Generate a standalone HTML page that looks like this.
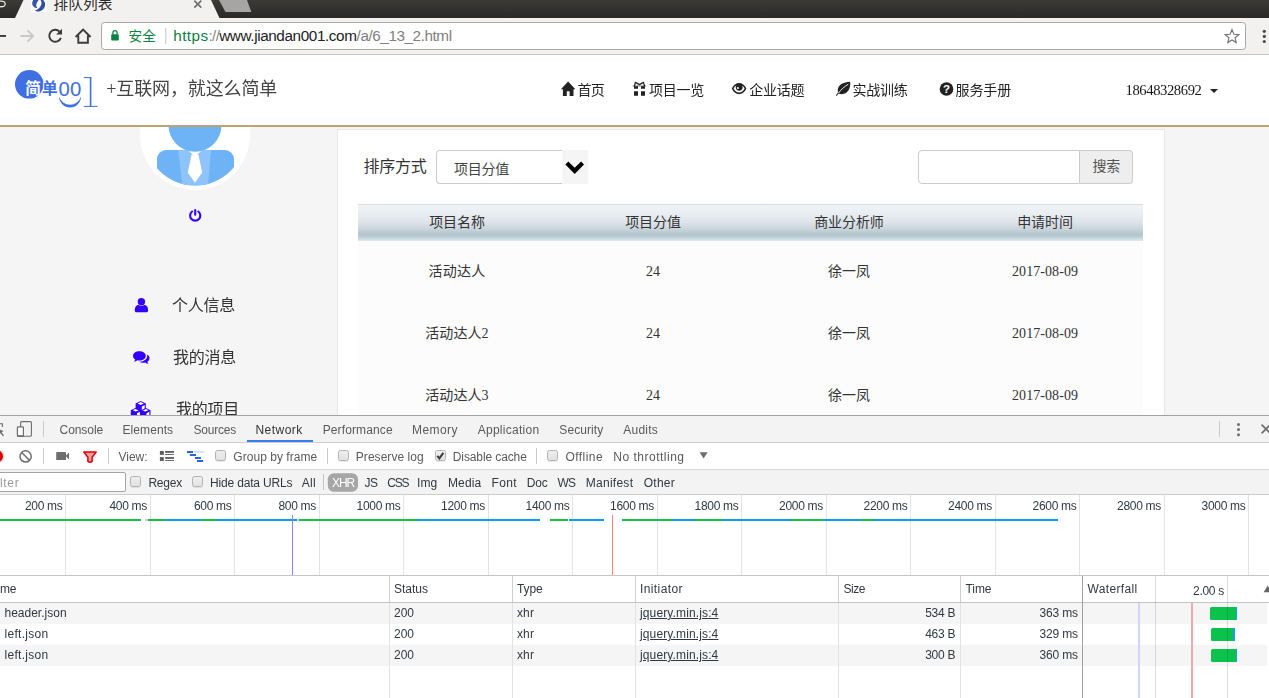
<!DOCTYPE html>
<html lang="zh-CN">
<head>
<meta charset="utf-8">
<title>排队列表</title>
<style>
html,body{margin:0;padding:0;}
body{width:1269px;height:698px;overflow:hidden;position:relative;background:#fff;font-family:"Liberation Sans","Noto Sans CJK SC",sans-serif;}
.abs,.t,svg.i{position:absolute;}
.t{white-space:nowrap;display:block;}
#chrome{position:absolute;left:0;top:0;width:1269px;height:55px;background:#f2f1f0;overflow:hidden;}
#site{position:absolute;left:0;top:0;width:1269px;height:415px;overflow:hidden;}
#dev{position:absolute;left:0;top:0;width:1269px;height:698px;overflow:hidden;pointer-events:none;}
#sitebg{position:absolute;left:0;top:55px;width:1269px;height:360px;background:#f5f5f5;}
#devbg{position:absolute;left:0;top:415px;width:1269px;height:283px;background:#fff;}
.cb{position:absolute;width:11px;height:11px;border:1px solid #b2b2b2;border-radius:2.5px;background:linear-gradient(#efefef,#e1e1e1);box-sizing:border-box;box-shadow:0 1px 0 rgba(0,0,0,0.08);}
.vd{position:absolute;width:1px;background:#ccc;}
.hl{position:absolute;height:1px;left:0;width:1269px;background:#ccc;}
.grid{position:absolute;width:1px;background:#e3e3e3;}
</style>
</head>
<body>
<!-- ================= SITE ================= -->
<div id="site">
<div id="sitebg"></div>
<div class="abs" style="left:0;top:55px;width:1269px;height:70px;background:#fff;border-bottom:2px solid #bda572;"></div>
<!-- logo -->
<svg class="i" style="left:0;top:55px" width="120" height="70" viewBox="0 55 120 70">
  <circle cx="29.3" cy="84.3" r="14.3" fill="#3f6fe0"/>
  <text x="41.9" y="93.6" font-family="'Liberation Sans','Noto Sans CJK SC',sans-serif" font-size="15.6" font-weight="bold" fill="#3f6fe0" stroke="#fff" stroke-width="2" paint-order="stroke" stroke-linejoin="round">单</text>
  <text x="25.3" y="93.6" font-family="'Liberation Sans','Noto Sans CJK SC',sans-serif" font-size="15.6" font-weight="bold" fill="#fff">简</text>
  <text x="58.6" y="95.5" font-family="'Liberation Sans',sans-serif" font-size="20.6" fill="#3f6fe0" textLength="22.6" lengthAdjust="spacingAndGlyphs">00</text>
  <path d="M59.1,96.6 A10.95,10.95 0 0 0 81,96.6 A11.4,11.4 0 0 1 59.1,96.6 Z" fill="#3f6fe0"/>
  <path d="M90.6,77.4 V106.6" stroke="#3f6fe0" stroke-width="1.6" fill="none"/>
  <path d="M83.8,77.6 H91.4 M83.8,106.4 H97.6" stroke="#3f6fe0" stroke-width="1" fill="none"/>
</svg>
<!-- nav icons -->
<svg class="i" style="left:555px;top:78px" width="680" height="22" viewBox="555 78 680 22" fill="#222">
  <!-- home -->
  <path d="M568.1,81.5 L575.4,89.2 H573.5 V95.9 H569.6 V91.2 H566.8 V95.9 H562.9 V89.2 H560.9 Z"/>
  <!-- gift -->
  <path d="M634,86.2 H638 V88.7 H634 Z M641,86.2 H645 V88.7 H641 Z M634,91.3 H638 V95.8 H634 Z M641,91.3 H645 V95.8 H641 Z"/>
  <rect x="632.6" y="85.4" width="13.6" height="1.1" fill="#222" opacity="0.55"/>
  <path d="M639.4,84.6 L635.4,82.4 L634.4,86 M639.4,84.6 L643.4,82.4 L644.5,86" fill="none" stroke="#222" stroke-width="1.25" stroke-linejoin="round" stroke-linecap="round"/>
  <!-- eye -->
  <path d="M731.8,88.6 C735,81 743.2,81 746.4,88.6 C743.2,96.2 735,96.2 731.8,88.6 Z M733.6,88.6 C736,93.8 742.2,93.8 744.6,88.6 C742.2,83.6 736,83.6 733.6,88.6 Z" fill-rule="evenodd"/>
  <circle cx="739.2" cy="87.3" r="3.4"/>
  <circle cx="737.9" cy="88" r="1" fill="#fff"/>
  <!-- leaf -->
  <path d="M850.2,81.8 C851,90 846,96 838.6,93.6 L836.6,96 L835.9,95.2 L838,92.6 C836.5,86 842,82.2 850.2,81.8 Z"/>
  <path d="M838.5,93 C841,89.5 844.5,86.5 848.3,84.2" stroke="#fff" stroke-width="0.9" fill="none"/>
  <!-- question -->
  <circle cx="946.5" cy="89" r="6.85"/>
  <text x="946.5" y="93.2" text-anchor="middle" font-family="'Liberation Sans',sans-serif" font-weight="bold" font-size="11.5" fill="#fff">?</text>
  <!-- caret -->
  <polygon points="1210,89 1218,89 1214,93.1"/>
</svg>
<!-- avatar -->
<svg class="i" style="left:135px;top:127px" width="120" height="70" viewBox="135 127 120 70">
  <defs><clipPath id="avc"><circle cx="195" cy="135" r="50.5"/></clipPath></defs>
  <circle cx="195" cy="135" r="55" fill="#fff"/>
  <g clip-path="url(#avc)">
    <rect x="157" y="150" width="77" height="50" rx="9" ry="9" fill="#6fb3f7"/>
    <polygon points="178.4,150 211,150 207.6,190 182.7,190" fill="#8ec4fb"/>
    <polygon points="187.6,150 202.4,150 195,156.5" fill="#fff"/>
    <polygon points="191.6,154.5 198.4,154.5 202.2,172.4 195,182.8 187.8,172.4" fill="#fff"/>
  </g>
  <circle cx="195" cy="125.2" r="26.5" fill="#6fb3f7"/>
</svg>
<!-- sidebar icons -->
<svg class="i" style="left:125px;top:205px" width="90" height="210" viewBox="125 205 90 210" fill="#3300ff">
  <!-- power -->
  <path d="M192.1,211.5 A5.1,5.1 0 1 0 198.3,211.5" stroke="#3300ff" stroke-width="2.1" fill="none" stroke-linecap="round"/>
  <path d="M195.2,210 V214.8" stroke="#3300ff" stroke-width="2.1" fill="none" stroke-linecap="round"/>
  <!-- user -->
  <circle cx="141.4" cy="301.7" r="3.7"/>
  <path d="M134.8,310.4 C134.8,306.5 136.5,305 138.6,305 C140.3,306.2 142.5,306.2 144.2,305 C146.3,305 148.1,306.5 148.1,310.4 C148.1,311.6 147.2,312.3 146.1,312.3 H136.8 C135.7,312.3 134.8,311.6 134.8,310.4 Z"/>
  <!-- comments -->
  <path d="M139.4,351.3 C143,351.3 145.8,353.3 145.8,355.9 C145.8,358.5 143,360.5 139.4,360.5 C138.7,360.5 138.1,360.4 137.5,360.3 C136.5,361.1 135.2,361.6 133.8,361.7 C134.5,361.1 135,360.3 135.2,359.5 C133.8,358.6 133,357.3 133,355.9 C133,353.3 135.8,351.3 139.4,351.3 Z"/>
  <path d="M147.1,354.6 C148.6,355.5 149.5,356.8 149.5,358.2 C149.5,359.6 148.7,360.8 147.4,361.7 C147.6,362.5 148.1,363.2 148.8,363.8 C147.4,363.7 146.1,363.2 145.1,362.4 C144.5,362.6 143.9,362.7 143.2,362.7 C141.6,362.7 140.2,362.3 139.1,361.7 C143.6,361.8 147.2,359.2 147.2,355.9 C147.2,355.5 147.2,355 147.1,354.6 Z"/>
  <!-- cubes -->
  <polygon points="135.9,407.8 141.0,410.2 141.0,415.7 135.9,418.1 130.8,415.7 130.8,410.2"/><polygon points="135.9,408.8 139.0,410.2 135.9,411.6 132.8,410.2" fill="#fff"/><polygon points="137.0,413.3 139.9,411.7 139.9,415.0 137.0,416.6" fill="#fff"/>
  <polygon points="145.4,407.8 150.5,410.2 150.5,415.7 145.4,418.1 140.3,415.7 140.3,410.2"/><polygon points="145.4,408.8 148.5,410.2 145.4,411.6 142.3,410.2" fill="#fff"/><polygon points="146.5,413.3 149.4,411.7 149.4,415.0 146.5,416.6" fill="#fff"/>
  <polygon points="140.7,401.1 145.8,403.5 145.8,409.0 140.7,411.4 135.6,409.0 135.6,403.5"/><polygon points="140.7,402.1 143.8,403.5 140.7,404.9 137.6,403.5" fill="#fff"/><polygon points="141.8,406.6 144.7,405.0 144.7,408.3 141.8,409.9" fill="#fff"/>
</svg>
<!-- content panel -->
<div class="abs" style="left:337px;top:129px;width:826px;height:300px;background:#fff;border:1px solid #e7e7e7;"></div>
<!-- select -->
<div class="abs" style="left:436px;top:150px;width:126px;height:32px;border:1px solid #ccc;border-right:none;border-radius:4px 0 0 4px;background:#fff;"></div>
<div class="abs" style="left:562px;top:150px;width:26px;height:34px;background:#f5f5f5;"></div>
<svg class="i" style="left:562px;top:150px" width="26" height="34" viewBox="562 150 26 34"><polygon points="565.4,164.5 568.3,161.5 574.7,167.8 581.1,161.5 584,164.5 574.7,174"/></svg>
<!-- search -->
<div class="abs" style="left:918px;top:150px;width:160px;height:32px;border:1px solid #ccc;border-radius:4px 0 0 4px;background:#fff;"></div>
<div class="abs" style="left:1080px;top:150px;width:52px;height:32px;border:1px solid #ccc;border-left:none;border-radius:0 4px 4px 0;background:#eee;"></div>
<!-- table -->
<div class="abs" style="left:358px;top:204px;width:785px;height:37px;background:linear-gradient(#dadcdd 0,#dadcdd 1px,#eff4f7 1px,#e8edf1 28%,#dbe2e8 52%,#c9d4db 68%,#b4c4ce 82%,#c0d0d9 90%,#dceaf2 100%);"></div>
<div class="abs" style="left:358px;top:241px;width:785px;height:180px;background:#fcfcfc;"></div>
<span class="t" style="left:363.4px;top:156.0px;font-size:16px;line-height:22px;color:#333;font-family:&quot;Liberation Serif&quot;,&quot;Noto Sans CJK SC&quot;,serif;letter-spacing:-0.25px;">排序方式</span>
<span class="t" style="left:454.0px;top:160.0px;font-size:14px;line-height:20px;color:#444;font-family:&quot;Liberation Serif&quot;,&quot;Noto Sans CJK SC&quot;,serif;letter-spacing:-0.25px;">项目分值</span>
<span class="t" style="left:1092.5px;top:157.0px;font-size:14px;line-height:20px;color:#555;font-family:&quot;Liberation Serif&quot;,&quot;Noto Sans CJK SC&quot;,serif;letter-spacing:-0.25px;">搜索</span>
<span class="t" style="left:429.2px;top:213.3px;font-size:14px;line-height:20px;color:#333;font-family:&quot;Liberation Serif&quot;,&quot;Noto Sans CJK SC&quot;,serif;letter-spacing:-0.10px;">项目名称</span>
<span class="t" style="left:625.2px;top:213.3px;font-size:14px;line-height:20px;color:#333;font-family:&quot;Liberation Serif&quot;,&quot;Noto Sans CJK SC&quot;,serif;letter-spacing:-0.10px;">项目分值</span>
<span class="t" style="left:814.2px;top:213.3px;font-size:14px;line-height:20px;color:#333;font-family:&quot;Liberation Serif&quot;,&quot;Noto Sans CJK SC&quot;,serif;letter-spacing:-0.10px;">商业分析师</span>
<span class="t" style="left:1017.2px;top:213.3px;font-size:14px;line-height:20px;color:#333;font-family:&quot;Liberation Serif&quot;,&quot;Noto Sans CJK SC&quot;,serif;letter-spacing:-0.10px;">申请时间</span>
<span class="t" style="left:428.5px;top:262.3px;font-size:14px;line-height:20px;color:#333;font-family:&quot;Liberation Serif&quot;,&quot;Noto Sans CJK SC&quot;,serif;letter-spacing:0.25px;">活动达人</span>
<span class="t" style="left:646.0px;top:262.3px;font-size:14px;line-height:20px;color:#333;font-family:&quot;Liberation Serif&quot;,&quot;Noto Sans CJK SC&quot;,serif;">24</span>
<span class="t" style="left:828.0px;top:262.3px;font-size:14px;line-height:20px;color:#333;font-family:&quot;Liberation Serif&quot;,&quot;Noto Sans CJK SC&quot;,serif;">徐一凤</span>
<span class="t" style="left:1012.0px;top:262.3px;font-size:14px;line-height:20px;color:#333;font-family:&quot;Liberation Serif&quot;,&quot;Noto Sans CJK SC&quot;,serif;letter-spacing:0.07px;">2017-08-09</span>
<span class="t" style="left:425.2px;top:324.3px;font-size:14px;line-height:20px;color:#333;font-family:&quot;Liberation Serif&quot;,&quot;Noto Sans CJK SC&quot;,serif;letter-spacing:0.10px;">活动达人2</span>
<span class="t" style="left:646.0px;top:324.3px;font-size:14px;line-height:20px;color:#333;font-family:&quot;Liberation Serif&quot;,&quot;Noto Sans CJK SC&quot;,serif;">24</span>
<span class="t" style="left:828.0px;top:324.3px;font-size:14px;line-height:20px;color:#333;font-family:&quot;Liberation Serif&quot;,&quot;Noto Sans CJK SC&quot;,serif;">徐一凤</span>
<span class="t" style="left:1012.0px;top:324.3px;font-size:14px;line-height:20px;color:#333;font-family:&quot;Liberation Serif&quot;,&quot;Noto Sans CJK SC&quot;,serif;letter-spacing:0.07px;">2017-08-09</span>
<span class="t" style="left:425.2px;top:386.3px;font-size:14px;line-height:20px;color:#333;font-family:&quot;Liberation Serif&quot;,&quot;Noto Sans CJK SC&quot;,serif;letter-spacing:0.10px;">活动达人3</span>
<span class="t" style="left:646.0px;top:386.3px;font-size:14px;line-height:20px;color:#333;font-family:&quot;Liberation Serif&quot;,&quot;Noto Sans CJK SC&quot;,serif;">24</span>
<span class="t" style="left:828.0px;top:386.3px;font-size:14px;line-height:20px;color:#333;font-family:&quot;Liberation Serif&quot;,&quot;Noto Sans CJK SC&quot;,serif;">徐一凤</span>
<span class="t" style="left:1012.0px;top:386.3px;font-size:14px;line-height:20px;color:#333;font-family:&quot;Liberation Serif&quot;,&quot;Noto Sans CJK SC&quot;,serif;letter-spacing:0.07px;">2017-08-09</span>
<div style="position:absolute;left:0;top:0;width:1269px;height:415px;will-change:transform;">
<span class="t" style="left:106.3px;top:77.0px;font-size:18px;line-height:25px;color:#444;font-family:&quot;Liberation Serif&quot;,&quot;Noto Sans CJK SC&quot;,serif;letter-spacing:-0.12px;">+互联网，就这么简单</span>
<span class="t" style="left:577.5px;top:81.0px;font-size:14px;line-height:20px;color:#222;font-family:&quot;Liberation Serif&quot;,&quot;Noto Sans CJK SC&quot;,serif;letter-spacing:-0.75px;">首页</span>
<span class="t" style="left:649.0px;top:81.0px;font-size:14px;line-height:20px;color:#222;font-family:&quot;Liberation Serif&quot;,&quot;Noto Sans CJK SC&quot;,serif;letter-spacing:-0.25px;">项目一览</span>
<span class="t" style="left:749.3px;top:81.0px;font-size:14px;line-height:20px;color:#222;font-family:&quot;Liberation Serif&quot;,&quot;Noto Sans CJK SC&quot;,serif;letter-spacing:-0.25px;">企业话题</span>
<span class="t" style="left:852.4px;top:81.0px;font-size:14px;line-height:20px;color:#222;font-family:&quot;Liberation Serif&quot;,&quot;Noto Sans CJK SC&quot;,serif;letter-spacing:-0.25px;">实战训练</span>
<span class="t" style="left:955.6px;top:81.0px;font-size:14px;line-height:20px;color:#222;font-family:&quot;Liberation Serif&quot;,&quot;Noto Sans CJK SC&quot;,serif;letter-spacing:-0.12px;">服务手册</span>
<span class="t" style="left:1125.5px;top:80.3px;font-size:14.6px;line-height:20px;color:#151515;font-family:&quot;Liberation Serif&quot;,&quot;Noto Sans CJK SC&quot;,serif;letter-spacing:-0.39px;">18648328692</span>
<span class="t" style="left:172.0px;top:295.0px;font-size:16px;line-height:22px;color:#333;font-family:&quot;Liberation Serif&quot;,&quot;Noto Sans CJK SC&quot;,serif;letter-spacing:-0.25px;">个人信息</span>
<span class="t" style="left:173.0px;top:347.0px;font-size:16px;line-height:22px;color:#333;font-family:&quot;Liberation Serif&quot;,&quot;Noto Sans CJK SC&quot;,serif;letter-spacing:-0.25px;">我的消息</span>
<span class="t" style="left:176.0px;top:398.5px;font-size:16px;line-height:22px;color:#333;font-family:&quot;Liberation Serif&quot;,&quot;Noto Sans CJK SC&quot;,serif;letter-spacing:-0.25px;">我的项目</span>
</div>
</div>
<!-- ================= BROWSER CHROME ================= -->
<div id="chrome">
<svg class="i" style="left:0;top:0" width="1269" height="55" viewBox="0 0 1269 55">
  <!-- tab strip -->
  <defs><linearGradient id="tsg" x1="0" y1="0" x2="0" y2="1"><stop offset="0" stop-color="#3b3a37"/><stop offset="1" stop-color="#2a2927"/></linearGradient></defs>
  <rect x="0" y="0" width="1269" height="18" fill="url(#tsg)"/>
  <polygon points="23.5,0 211,0 219.5,18 15,18" fill="#f2f1f0"/>
  <polygon points="219,0 247,0 251.3,12 225.5,12" fill="#a6a5a3"/>
  <!-- toolbar bottom line -->
  <rect x="0" y="54" width="1269" height="1" fill="#c6c5c4"/>
  <!-- favicon -->
  <rect x="31" y="0" width="16" height="12.1" fill="#fefefe"/>
  <path d="M33.2,0 C31.4,3 31.8,6.6 36.2,8 C37.3,8.1 37.5,7.6 36.7,7 C35.6,5.4 36.5,2.5 38.7,0 Z" fill="#3158a8"/>
  <path d="M40.4,0 C41.9,1.5 41.9,4 40.4,6.6 C39.2,8.6 37.4,9.8 35,10.4 C36.5,11.7 39.5,11.9 41.6,10.6 C45.6,8.2 46.3,3 43.2,0 Z" fill="#2f4ea3"/>
  <!-- tab close -->
  <path d="M194.3,0.6 L201.3,7.6 M201.3,0.6 L194.3,7.6" stroke="#6b6b6b" stroke-width="1.5" fill="none"/>
  <!-- fragment of previous tab title -->
  <path d="M0,1.2 C3.5,0.8 5.4,2.2 5.2,4.2 C5,6.3 3,7 0,6.7" stroke="#e8e6e3" stroke-width="1.3" fill="none"/>
  <!-- back (cut) -->
  <rect x="0" y="35" width="6" height="1.9" fill="#3b3b3b"/>
  <!-- forward (disabled) -->
  <path d="M20.5,36 H33 M27.5,30.3 L33.2,36 L27.5,41.7" stroke="#c9c8c7" stroke-width="1.8" fill="none"/>
  <!-- reload -->
  <path d="M59.6,31.6 A6,6 0 1 0 60.9,37.8" stroke="#3b3b3b" stroke-width="1.9" fill="none"/>
  <polygon points="56.2,34.6 62,34.6 62,28.8" fill="#3b3b3b"/>
  <!-- home -->
  <path d="M75.6,37 L83.1,29.5 L90.6,37 M78.3,35.4 V42.7 H87.9 V35.4" stroke="#3b3b3b" stroke-width="1.9" fill="none" stroke-linejoin="miter"/>
  <!-- omnibox -->
  <rect x="101.5" y="22.5" width="1144" height="27" rx="3" ry="3" fill="#fff" stroke="#a8a7a6" stroke-width="1"/>
  <!-- lock -->
  <rect x="111.2" y="34.2" width="7.6" height="6.3" rx="0.8" fill="#0b8043"/>
  <path d="M112.9,34.6 V32.8 A2.1,2.1 0 0 1 117.1,32.8 V34.6" stroke="#0b8043" stroke-width="1.3" fill="none"/>
  <rect x="165.3" y="28" width="1" height="16" fill="#c4c4c4"/>
  <!-- star -->
  <path d="M1232,29.6 L1233.9,34.2 L1238.8,34.6 L1235.1,37.8 L1236.2,42.6 L1232,40 L1227.8,42.6 L1228.9,37.8 L1225.2,34.6 L1230.1,34.2 Z" stroke="#717171" stroke-width="1.15" fill="none" stroke-linejoin="miter"/>
  <!-- menu dots -->
  <circle cx="1264.3" cy="31.3" r="1.6" fill="#4a4a4a"/><circle cx="1264.3" cy="36.4" r="1.6" fill="#4a4a4a"/><circle cx="1264.3" cy="41.5" r="1.6" fill="#4a4a4a"/>
</svg>
<span class="t" style="left:53.6px;top:-6.4px;font-size:14.7px;line-height:21px;color:#2b2b2b;letter-spacing:0.06px;">排队列表</span>
<span class="t" style="left:128.6px;top:27.0px;font-size:13.6px;line-height:19px;color:#0b8043;">安全</span>
<span class="t" style="left:173.3px;top:24.9px;font-size:15.3px;line-height:21px;color:#0b8043;letter-spacing:0.41px;">https</span>
<span class="t" style="left:208.6px;top:24.9px;font-size:15.3px;line-height:21px;color:#8a8a8a;letter-spacing:-0.72px;">://</span>
<span class="t" style="left:219.2px;top:24.9px;font-size:15.3px;line-height:21px;color:#222;letter-spacing:-0.40px;">www.jiandan001.com</span>
<span class="t" style="left:356.6px;top:24.9px;font-size:15.3px;line-height:21px;color:#808080;letter-spacing:-0.44px;">/a/6_13_2.html</span>
</div>
<!-- ================= DEVTOOLS ================= -->
<div id="devbg"></div>
<div id="dev">
<!-- bars -->
<div class="abs" style="left:0;top:415px;width:1269px;height:1px;background:#a3a3a3;"></div>
<div class="abs" style="left:0;top:416px;width:1269px;height:26px;background:#f3f3f3;"></div>
<div class="hl" style="top:442px;background:#cdcdcd;"></div>
<div class="abs" style="left:0;top:443px;width:1269px;height:26px;background:#fff;"></div>
<div class="hl" style="top:469px;background:#dadada;"></div>
<div class="abs" style="left:0;top:470px;width:1269px;height:24px;background:#f3f3f3;"></div>
<div class="hl" style="top:494px;background:#cdcdcd;"></div>
<!-- network tab underline -->
<div class="abs" style="left:246.5px;top:440px;width:66px;height:2px;background:#3b7de8;"></div>
<!-- tabbar + toolbar icons -->
<svg class="i" style="left:0;top:416px" width="1269" height="80" viewBox="0 416 1269 80">
  <!-- inspect (cut) -->
  <path d="M0,423.8 H2.4 V427" stroke="#6e6e6e" stroke-width="1.1" fill="none"/>
  <path d="M0,429.8 L3.6,431 L1.6,432.2 L4,435.4 L3,436.2 L0.4,433.2 L0,433.6 Z" fill="#6e6e6e"/>
  <!-- device toggle -->
  <rect x="20.6" y="421.6" width="10.8" height="14.6" rx="1" fill="none" stroke="#6e6e6e" stroke-width="1.1"/>
  <rect x="17.4" y="426.8" width="6" height="9.6" rx="0.8" fill="#fbfbfb" stroke="#6e6e6e" stroke-width="1.2"/>
  <rect x="17.4" y="435.2" width="6" height="1.4" fill="#6e6e6e"/>
  <rect x="43" y="421" width="1" height="16" fill="#ccc"/>
  <rect x="1219" y="421" width="1" height="16" fill="#ccc"/>
  <circle cx="1238.5" cy="424.5" r="1.5" fill="#6e6e6e"/><circle cx="1238.5" cy="429.6" r="1.5" fill="#6e6e6e"/><circle cx="1238.5" cy="434.7" r="1.5" fill="#6e6e6e"/>
  <path d="M1261.6,424.6 L1270.4,433.4 M1270.4,424.6 L1261.6,433.4" stroke="#6e6e6e" stroke-width="1.7" fill="none"/>
  <!-- record -->
  <circle cx="-3" cy="456.2" r="7.2" fill="#f7b0b0" opacity="0.6"/>
  <circle cx="-3" cy="456.2" r="6" fill="#dc0000"/>
  <!-- clear -->
  <circle cx="25.6" cy="456.4" r="5.6" fill="none" stroke="#6e6e6e" stroke-width="1.5"/>
  <path d="M21.7,452.5 L29.5,460.3" stroke="#6e6e6e" stroke-width="1.5"/>
  <rect x="43" y="448" width="1" height="16" fill="#ccc"/>
  <!-- camera -->
  <rect x="56.2" y="452.1" width="9.8" height="7.9" rx="0.6" fill="#6e6e6e"/>
  <polygon points="65.6,456 69,452.4 69,459.6" fill="#6e6e6e"/>
  <!-- filter -->
  <path d="M83.8,452.1 H96.2 L92.1,457.2 V461.4 C91,462.2 89,462.2 87.9,461.4 V457.2 Z" fill="#f09a9a" stroke="#d8000c" stroke-width="1.5" stroke-linejoin="round"/>
  <rect x="108" y="448" width="1" height="16" fill="#ccc"/>
  <!-- list view -->
  <g fill="#5f5f5f"><rect x="159.9" y="451" width="3.9" height="3.9"/><rect x="159.9" y="457.1" width="3.9" height="3.9"/>
  <rect x="165.1" y="451" width="8.9" height="1.8"/><rect x="165.1" y="454.1" width="8.9" height="0.9"/><rect x="165.1" y="457.1" width="8.9" height="1.8"/><rect x="165.1" y="460.1" width="8.9" height="0.9"/></g>
  <!-- waterfall view -->
  <g fill="#2a66e6"><rect x="186.9" y="451" width="6.1" height="2"/><rect x="189.9" y="454" width="6.1" height="2"/><rect x="194.9" y="457" width="6.1" height="2"/><rect x="197" y="460" width="6.1" height="2"/></g>
  <rect x="193.7" y="451" width="10.3" height="2" fill="#d6e4fb"/>
  <rect x="327" y="448" width="1" height="16" fill="#ccc"/>
  <rect x="536" y="448" width="1" height="16" fill="#ccc"/>
  <polygon points="699.6,452.3 707.6,452.3 703.6,458.6" fill="#6e6e6e"/>
  <rect x="323" y="474" width="1" height="16" fill="#c4c4c4"/>
  <!-- XHR pill -->
  <rect x="327.8" y="473.2" width="30.2" height="18.5" rx="6" fill="#a6a6a6"/>
</svg>
<!-- checkboxes -->
<div class="cb" style="left:215px;top:450px;"></div>
<div class="cb" style="left:338px;top:450px;"></div>
<div class="cb" style="left:435px;top:450px;"></div>
<svg class="i" style="left:435px;top:450px" width="11" height="11" viewBox="435 450 11 11"><path d="M437.3,455.9 L439.4,458.3 L443.3,452.8" stroke="#3a3a3a" stroke-width="2" fill="none"/></svg>
<div class="cb" style="left:547px;top:450px;"></div>
<div class="cb" style="left:130px;top:476px;"></div>
<div class="cb" style="left:192px;top:476px;"></div>
<!-- filter input -->
<div class="abs" style="left:-10px;top:472px;width:134px;height:18px;border:1px solid #a4a4a4;border-radius:2px;background:#fff;"></div>
<!-- overview -->
<div class="grid" style="left:65px;top:495px;height:80px;"></div>
<div class="grid" style="left:150px;top:495px;height:80px;"></div>
<div class="grid" style="left:234px;top:495px;height:80px;"></div>
<div class="grid" style="left:319px;top:495px;height:80px;"></div>
<div class="grid" style="left:403px;top:495px;height:80px;"></div>
<div class="grid" style="left:488px;top:495px;height:80px;"></div>
<div class="grid" style="left:572px;top:495px;height:80px;"></div>
<div class="grid" style="left:657px;top:495px;height:80px;"></div>
<div class="grid" style="left:741px;top:495px;height:80px;"></div>
<div class="grid" style="left:826px;top:495px;height:80px;"></div>
<div class="grid" style="left:910px;top:495px;height:80px;"></div>
<div class="grid" style="left:995px;top:495px;height:80px;"></div>
<div class="grid" style="left:1079px;top:495px;height:80px;"></div>
<div class="grid" style="left:1164px;top:495px;height:80px;"></div>
<div class="grid" style="left:1248px;top:495px;height:80px;"></div>
<div class="abs" style="left:0px;top:519px;width:139.6px;height:2px;background:#14c345;"></div>
<div class="abs" style="left:139.6px;top:519px;width:1.2px;height:2px;background:#0f9bf0;"></div>
<div class="abs" style="left:145.2px;top:519px;width:3.0px;height:2px;background:#d0d0d0;"></div>
<div class="abs" style="left:148.2px;top:519px;width:17.1px;height:2px;background:#14c345;"></div>
<div class="abs" style="left:165.3px;top:519px;width:35.8px;height:2px;background:#0f9bf0;"></div>
<div class="abs" style="left:201.1px;top:519px;width:14.6px;height:2px;background:#14c345;"></div>
<div class="abs" style="left:215.7px;top:519px;width:81.7px;height:2px;background:#0f9bf0;"></div>
<div class="abs" style="left:297.4px;top:519px;width:1.4px;height:2px;background:#d0d0d0;"></div>
<div class="abs" style="left:298.8px;top:519px;width:118.2px;height:2px;background:#14c345;"></div>
<div class="abs" style="left:417px;top:519px;width:122.5px;height:2px;background:#0f9bf0;"></div>
<div class="abs" style="left:550.4px;top:519px;width:18.1px;height:2px;background:#14c345;"></div>
<div class="abs" style="left:568.5px;top:519px;width:35.0px;height:2px;background:#0f9bf0;"></div>
<div class="abs" style="left:622px;top:519px;width:50px;height:2px;background:#14c345;"></div>
<div class="abs" style="left:639.2px;top:519px;width:1.0px;height:2px;background:#0f9bf0;"></div>
<div class="abs" style="left:656.4px;top:519px;width:1.0px;height:2px;background:#0f9bf0;"></div>
<div class="abs" style="left:672px;top:519px;width:23px;height:2px;background:#0f9bf0;"></div>
<div class="abs" style="left:695px;top:519px;width:27.4px;height:2px;background:#14c345;"></div>
<div class="abs" style="left:706.3px;top:519px;width:1.0px;height:2px;background:#0f9bf0;"></div>
<div class="abs" style="left:722.4px;top:519px;width:69.0px;height:2px;background:#0f9bf0;"></div>
<div class="abs" style="left:791.4px;top:519px;width:31.6px;height:2px;background:#14c345;"></div>
<div class="abs" style="left:806.6px;top:519px;width:1.0px;height:2px;background:#0f9bf0;"></div>
<div class="abs" style="left:823px;top:519px;width:37.8px;height:2px;background:#0f9bf0;"></div>
<div class="abs" style="left:860.8px;top:519px;width:12.1px;height:2px;background:#14c345;"></div>
<div class="abs" style="left:872.9px;top:519px;width:185.5px;height:2px;background:#0f9bf0;"></div>
<div class="abs" style="left:292px;top:515px;width:1px;height:60px;background:#8484ff;"></div>
<div class="abs" style="left:612px;top:515px;width:1px;height:60px;background:#ff8282;"></div>
<div class="hl" style="top:575px;background:#c4c4c4;"></div>
<!-- request table -->
<div class="abs" style="left:0;top:603px;width:1267px;height:21px;background:#f5f5f5;"></div>
<div class="abs" style="left:0;top:645px;width:1267px;height:21px;background:#f5f5f5;"></div>
<div class="hl" style="top:602px;background:#c4c4c4;"></div>
<div class="vd" style="left:389px;top:576px;height:26px;background:#cfcfcf;"></div><div class="vd" style="left:389px;top:603px;height:95px;background:#e2e2e2;"></div>
<div class="vd" style="left:512px;top:576px;height:26px;background:#cfcfcf;"></div><div class="vd" style="left:512px;top:603px;height:95px;background:#e2e2e2;"></div>
<div class="vd" style="left:635px;top:576px;height:26px;background:#cfcfcf;"></div><div class="vd" style="left:635px;top:603px;height:95px;background:#e2e2e2;"></div>
<div class="vd" style="left:838px;top:576px;height:26px;background:#cfcfcf;"></div><div class="vd" style="left:838px;top:603px;height:95px;background:#e2e2e2;"></div>
<div class="vd" style="left:960px;top:576px;height:26px;background:#cfcfcf;"></div><div class="vd" style="left:960px;top:603px;height:95px;background:#e2e2e2;"></div>
<div class="vd" style="left:1082px;top:576px;height:122px;background:#a0a0a0;"></div>
<!-- waterfall column -->
<div class="abs" style="left:1138px;top:603px;width:2px;height:95px;background:#d2d2fb;"></div>
<div class="abs" style="left:1191px;top:603px;width:2px;height:95px;background:#f1aaaa;"></div>
<div class="abs" style="left:1210px;top:607px;width:26px;height:13px;background:#0bc24d;border-radius:1.5px 0 0 1.5px;"></div>
<div class="abs" style="left:1236px;top:607px;width:1px;height:13px;background:#1a9cf0;"></div>
<div class="abs" style="left:1211px;top:628px;width:22px;height:13px;background:#0bc24d;border-radius:1.5px 0 0 1.5px;"></div>
<div class="abs" style="left:1233px;top:628px;width:2px;height:13px;background:#1a9cf0;"></div>
<div class="abs" style="left:1211px;top:649px;width:25px;height:13px;background:#0bc24d;border-radius:1.5px 0 0 1.5px;"></div>
<div class="abs" style="left:1236px;top:649px;width:1px;height:13px;background:#1a9cf0;"></div>
<div class="abs" style="left:1155px;top:576px;width:1px;height:122px;background:rgba(0,0,0,0.12);"></div>
<div class="abs" style="left:1227px;top:576px;width:1px;height:122px;background:rgba(0,0,0,0.12);"></div>
<svg class="i" style="left:1260px;top:582px" width="9" height="12" viewBox="1260 582 9 12"><polygon points="1263.6,592.3 1272,592.3 1267.8,585.6" fill="#666"/></svg>
<span class="t" style="left:59.6px;top:422.0px;font-size:12px;line-height:17px;color:#5a5a5a;letter-spacing:-0.08px;">Console</span>
<span class="t" style="left:122.4px;top:422.0px;font-size:12px;line-height:17px;color:#5a5a5a;letter-spacing:0.10px;">Elements</span>
<span class="t" style="left:193.6px;top:422.0px;font-size:12px;line-height:17px;color:#5a5a5a;letter-spacing:-0.23px;">Sources</span>
<span class="t" style="left:255.4px;top:422.0px;font-size:12px;line-height:17px;color:#333;letter-spacing:0.48px;">Network</span>
<span class="t" style="left:322.7px;top:422.0px;font-size:12px;line-height:17px;color:#5a5a5a;letter-spacing:0.12px;">Performance</span>
<span class="t" style="left:412.0px;top:422.0px;font-size:12px;line-height:17px;color:#5a5a5a;letter-spacing:0.41px;">Memory</span>
<span class="t" style="left:477.7px;top:422.0px;font-size:12px;line-height:17px;color:#5a5a5a;letter-spacing:0.27px;">Application</span>
<span class="t" style="left:559.3px;top:422.0px;font-size:12px;line-height:17px;color:#5a5a5a;letter-spacing:0.09px;">Security</span>
<span class="t" style="left:623.3px;top:422.0px;font-size:12px;line-height:17px;color:#5a5a5a;letter-spacing:0.22px;">Audits</span>
<span class="t" style="left:118.5px;top:448.9px;font-size:12px;line-height:17px;color:#5a5a5a;letter-spacing:-0.03px;">View:</span>
<span class="t" style="left:233.3px;top:448.9px;font-size:12px;line-height:17px;color:#5a5a5a;letter-spacing:0.04px;">Group by frame</span>
<span class="t" style="left:355.8px;top:448.9px;font-size:12px;line-height:17px;color:#5a5a5a;letter-spacing:0.04px;">Preserve log</span>
<span class="t" style="left:452.8px;top:448.9px;font-size:12px;line-height:17px;color:#5a5a5a;letter-spacing:-0.11px;">Disable cache</span>
<span class="t" style="left:565.4px;top:448.9px;font-size:12px;line-height:17px;color:#5a5a5a;letter-spacing:0.45px;">Offline</span>
<span class="t" style="left:613.3px;top:448.9px;font-size:12px;line-height:17px;color:#5a5a5a;letter-spacing:0.50px;">No throttling</span>
<span class="t" style="left:0.0px;top:474.8px;font-size:12px;line-height:17px;color:#9a9a9a;letter-spacing:0.66px;">lter</span>
<span class="t" style="left:148.4px;top:474.8px;font-size:12px;line-height:17px;color:#303942;letter-spacing:-0.22px;">Regex</span>
<span class="t" style="left:210.0px;top:474.8px;font-size:12px;line-height:17px;color:#303942;letter-spacing:-0.17px;">Hide data URLs</span>
<span class="t" style="left:301.7px;top:474.8px;font-size:12px;line-height:17px;color:#303942;letter-spacing:0.32px;">All</span>
<span class="t" style="left:364.6px;top:474.8px;font-size:12px;line-height:17px;color:#303942;letter-spacing:-0.66px;">JS</span>
<span class="t" style="left:387.2px;top:474.8px;font-size:12px;line-height:17px;color:#303942;letter-spacing:-1.20px;">CSS</span>
<span class="t" style="left:417.0px;top:474.8px;font-size:12px;line-height:17px;color:#303942;letter-spacing:0.13px;">Img</span>
<span class="t" style="left:447.9px;top:474.8px;font-size:12px;line-height:17px;color:#303942;letter-spacing:0.18px;">Media</span>
<span class="t" style="left:491.5px;top:474.8px;font-size:12px;line-height:17px;color:#303942;letter-spacing:0.32px;">Font</span>
<span class="t" style="left:526.8px;top:474.8px;font-size:12px;line-height:17px;color:#303942;letter-spacing:-0.15px;">Doc</span>
<span class="t" style="left:557.6px;top:474.8px;font-size:12px;line-height:17px;color:#303942;letter-spacing:-0.82px;">WS</span>
<span class="t" style="left:585.8px;top:474.8px;font-size:12px;line-height:17px;color:#303942;letter-spacing:0.26px;">Manifest</span>
<span class="t" style="left:643.7px;top:474.8px;font-size:12px;line-height:17px;color:#303942;letter-spacing:0.28px;">Other</span>
<span class="t" style="left:332.0px;top:474.8px;font-size:12px;line-height:17px;color:#fff;letter-spacing:-1.11px;">XHR</span>
<span class="t" style="left:24.9px;top:497.8px;font-size:12px;line-height:17px;color:#303942;letter-spacing:-0.29px;">200 ms</span>
<span class="t" style="left:109.4px;top:497.8px;font-size:12px;line-height:17px;color:#303942;letter-spacing:-0.29px;">400 ms</span>
<span class="t" style="left:193.9px;top:497.8px;font-size:12px;line-height:17px;color:#303942;letter-spacing:-0.29px;">600 ms</span>
<span class="t" style="left:278.4px;top:497.8px;font-size:12px;line-height:17px;color:#303942;letter-spacing:-0.29px;">800 ms</span>
<span class="t" style="left:356.5px;top:497.8px;font-size:12px;line-height:17px;color:#303942;letter-spacing:-0.29px;">1000 ms</span>
<span class="t" style="left:441.0px;top:497.8px;font-size:12px;line-height:17px;color:#303942;letter-spacing:-0.29px;">1200 ms</span>
<span class="t" style="left:525.5px;top:497.8px;font-size:12px;line-height:17px;color:#303942;letter-spacing:-0.29px;">1400 ms</span>
<span class="t" style="left:610.0px;top:497.8px;font-size:12px;line-height:17px;color:#303942;letter-spacing:-0.29px;">1600 ms</span>
<span class="t" style="left:694.5px;top:497.8px;font-size:12px;line-height:17px;color:#303942;letter-spacing:-0.29px;">1800 ms</span>
<span class="t" style="left:779.0px;top:497.8px;font-size:12px;line-height:17px;color:#303942;letter-spacing:-0.29px;">2000 ms</span>
<span class="t" style="left:863.5px;top:497.8px;font-size:12px;line-height:17px;color:#303942;letter-spacing:-0.29px;">2200 ms</span>
<span class="t" style="left:948.0px;top:497.8px;font-size:12px;line-height:17px;color:#303942;letter-spacing:-0.29px;">2400 ms</span>
<span class="t" style="left:1032.5px;top:497.8px;font-size:12px;line-height:17px;color:#303942;letter-spacing:-0.29px;">2600 ms</span>
<span class="t" style="left:1117.0px;top:497.8px;font-size:12px;line-height:17px;color:#303942;letter-spacing:-0.29px;">2800 ms</span>
<span class="t" style="left:1201.5px;top:497.8px;font-size:12px;line-height:17px;color:#303942;letter-spacing:-0.29px;">3000 ms</span>
<span class="t" style="left:0.0px;top:580.9px;font-size:12px;line-height:17px;color:#303942;letter-spacing:-0.34px;">me</span>
<span class="t" style="left:394.0px;top:580.9px;font-size:12px;line-height:17px;color:#303942;">Status</span>
<span class="t" style="left:517.0px;top:580.9px;font-size:12px;line-height:17px;color:#303942;letter-spacing:-0.13px;">Type</span>
<span class="t" style="left:640.0px;top:580.9px;font-size:12px;line-height:17px;color:#303942;letter-spacing:0.40px;">Initiator</span>
<span class="t" style="left:843.5px;top:580.9px;font-size:12px;line-height:17px;color:#303942;letter-spacing:-0.46px;">Size</span>
<span class="t" style="left:965.5px;top:580.9px;font-size:12px;line-height:17px;color:#303942;letter-spacing:-0.06px;">Time</span>
<span class="t" style="left:1087.5px;top:580.9px;font-size:12px;line-height:17px;color:#303942;letter-spacing:0.34px;">Waterfall</span>
<span class="t" style="left:1193.0px;top:583.3px;font-size:12px;line-height:17px;color:#303942;letter-spacing:-0.28px;">2.00 s</span>
<span class="t" style="left:4.5px;top:604.9px;font-size:12px;line-height:17px;color:#303942;">header.json</span>
<span class="t" style="left:394.0px;top:604.9px;font-size:12px;line-height:17px;color:#303942;letter-spacing:-0.01px;">200</span>
<span class="t" style="left:517.0px;top:604.9px;font-size:12px;line-height:17px;color:#303942;letter-spacing:0.11px;">xhr</span>
<span class="t" style="left:640.0px;top:604.9px;font-size:12px;line-height:17px;color:#303942;letter-spacing:0.13px;text-decoration:underline;">jquery.min.js:4</span>
<span class="t" style="left:925.2px;top:604.9px;font-size:12px;line-height:17px;color:#303942;letter-spacing:-0.27px;">534 B</span>
<span class="t" style="left:1039.4px;top:604.9px;font-size:12px;line-height:17px;color:#303942;letter-spacing:-0.14px;">363 ms</span>
<span class="t" style="left:4.5px;top:625.9px;font-size:12px;line-height:17px;color:#303942;letter-spacing:0.29px;">left.json</span>
<span class="t" style="left:394.0px;top:625.9px;font-size:12px;line-height:17px;color:#303942;letter-spacing:-0.01px;">200</span>
<span class="t" style="left:517.0px;top:625.9px;font-size:12px;line-height:17px;color:#303942;letter-spacing:0.11px;">xhr</span>
<span class="t" style="left:640.0px;top:625.9px;font-size:12px;line-height:17px;color:#303942;letter-spacing:0.13px;text-decoration:underline;">jquery.min.js:4</span>
<span class="t" style="left:925.2px;top:625.9px;font-size:12px;line-height:17px;color:#303942;letter-spacing:-0.27px;">463 B</span>
<span class="t" style="left:1039.4px;top:625.9px;font-size:12px;line-height:17px;color:#303942;letter-spacing:-0.14px;">329 ms</span>
<span class="t" style="left:4.5px;top:646.9px;font-size:12px;line-height:17px;color:#303942;letter-spacing:0.29px;">left.json</span>
<span class="t" style="left:394.0px;top:646.9px;font-size:12px;line-height:17px;color:#303942;letter-spacing:-0.01px;">200</span>
<span class="t" style="left:517.0px;top:646.9px;font-size:12px;line-height:17px;color:#303942;letter-spacing:0.11px;">xhr</span>
<span class="t" style="left:640.0px;top:646.9px;font-size:12px;line-height:17px;color:#303942;letter-spacing:0.13px;text-decoration:underline;">jquery.min.js:4</span>
<span class="t" style="left:925.2px;top:646.9px;font-size:12px;line-height:17px;color:#303942;letter-spacing:-0.27px;">300 B</span>
<span class="t" style="left:1039.4px;top:646.9px;font-size:12px;line-height:17px;color:#303942;letter-spacing:-0.14px;">360 ms</span>
</div>
</body>
</html>
